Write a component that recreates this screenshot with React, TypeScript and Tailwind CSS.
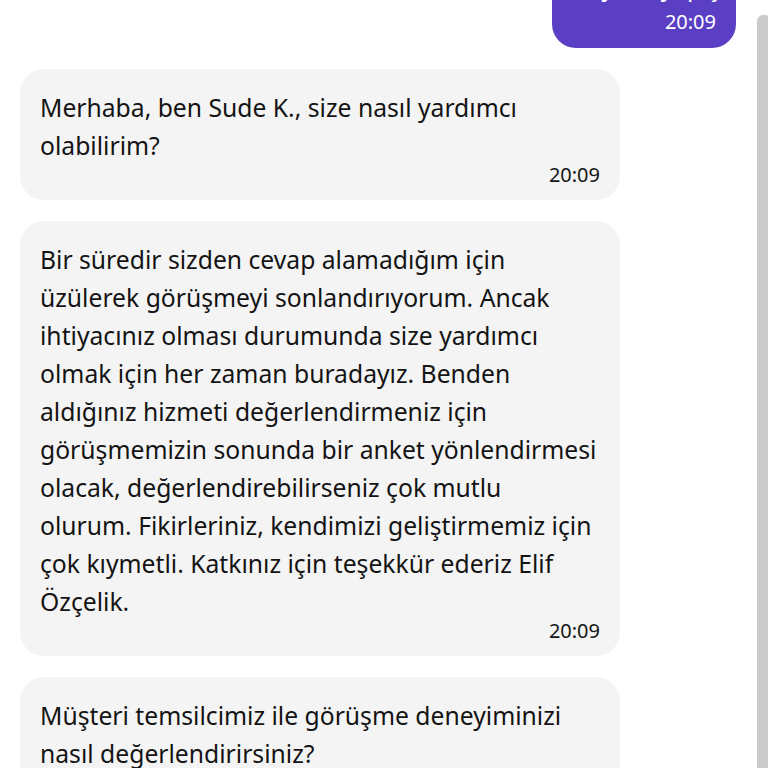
import React from 'react';

type Msg = {
  from: 'me' | 'agent';
  lines: string[];
  time?: string;
};

const messages: Msg[] = [
  { from: 'me', lines: ['Bilgi alabilir', 'miyim? yapış'], time: '20:09' },
  { from: 'agent', lines: ['Merhaba, ben Sude K., size nasıl yardımcı', 'olabilirim?'], time: '20:09' },
  {
    from: 'agent',
    lines: [
      'Bir süredir sizden cevap alamadığım için',
      'üzülerek görüşmeyi sonlandırıyorum. Ancak',
      'ihtiyacınız olması durumunda size yardımcı',
      'olmak için her zaman buradayız. Benden',
      'aldığınız hizmeti değerlendirmeniz için',
      'görüşmemizin sonunda bir anket yönlendirmesi',
      'olacak, değerlendirebilirseniz çok mutlu',
      'olurum. Fikirleriniz, kendimizi geliştirmemiz için',
      'çok kıymetli. Katkınız için teşekkür ederiz Elif',
      'Özçelik.',
    ],
    time: '20:09',
  },
  { from: 'agent', lines: ['Müşteri temsilcimiz ile görüşme deneyiminizi', 'nasıl değerlendirirsiniz?'], time: '20:09' },
];

const Bubble = ({ msg }: { msg: Msg }) => {
  const mine = msg.from === 'me';
  return (
    <div className={mine ? 'flex justify-end' : 'flex justify-start'}>
      <div
        className={
          mine
            ? 'w-[184px] bg-[#5a3fc5] text-white rounded-[24px] px-5 pt-[14px] pb-[16px]'
            : 'w-[600px] bg-[#f4f4f4] text-[#141414] rounded-[24px] px-5 pt-5 pb-[15px]'
        }
      >
        <p className="text-[24.7px] leading-[38px]">
          {msg.lines.map((l, i) => (
            <span key={i} className="block whitespace-nowrap">
              {l}
            </span>
          ))}
        </p>
        {msg.time && (
          <div className={mine ? 'text-right text-[20px] leading-[20px] pt-[6px]' : 'text-right text-[20px] leading-[20px]'}>
            {msg.time}
          </div>
        )}
      </div>
    </div>
  );
};

export default function App() {
  return (
    <div className="h-screen w-full overflow-hidden bg-white flex" style={{ fontFamily: '"Noto Sans", "Open Sans", sans-serif' }}>
      <div className="flex-1 overflow-hidden">
        <div className="flex flex-col gap-[21px] pl-5 pr-[21px] -mt-[84px]">
          {messages.map((m, i) => (
            <Bubble key={i} msg={m} />
          ))}
        </div>
      </div>
      <div className="w-[11px] flex flex-col">
        <div className="mt-[15px] flex-1 bg-[#cbcbcb] rounded-tl-[6px] rounded-tr-[2px]" />
      </div>
    </div>
  );
}
